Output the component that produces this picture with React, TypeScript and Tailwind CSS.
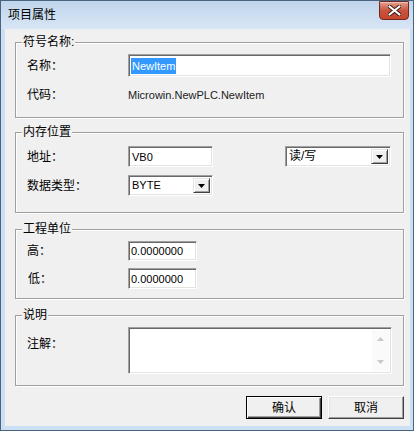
import React from "react";

const font = { fontFamily: '"Liberation Sans", "Noto Sans CJK SC", sans-serif' };

const sunken =
  "bg-white border border-t-[#a0a0a0] border-l-[#a0a0a0] border-b-white border-r-white shadow-[inset_1px_1px_0_#696969,inset_-1px_-1px_0_#e3e3e3]";

function Group({
  title,
  className,
  children,
}: {
  title: string;
  className: string;
  children: React.ReactNode;
}) {
  return (
    <div
      className={`relative ml-[10px] w-[389px] border border-[#a0a0a0] shadow-[inset_1px_1px_0_#fff,1px_1px_0_#fff] ${className}`}
    >
      <span className="absolute left-[6px] -top-[9px] bg-[#f0f0f0] px-[1px] text-[12px] leading-[16px] text-black">
        {title}
      </span>
      {children}
    </div>
  );
}

function DropButton() {
  return (
    <div className="flex h-full w-[17px] items-center justify-center border border-t-[#e3e3e3] border-l-[#e3e3e3] border-b-[#404040] border-r-[#404040] bg-[#f0f0f0] shadow-[inset_1px_1px_0_#fff,inset_-1px_-1px_0_#a0a0a0]">
      <svg width="7" height="4" viewBox="0 0 7 4">
        <path d="M0 0h7L3.5 4z" fill="#000" />
      </svg>
    </div>
  );
}

function Combo({ value, width, size }: { value: string; width: string; size: string }) {
  return (
    <div className={`flex h-[21px] items-stretch ${width} ${sunken} p-[2px]`}>
      <span className={`flex-1 pl-[1px] leading-[15px] ${size}`}>{value}</span>
      <DropButton />
    </div>
  );
}

function Label({ children }: { children: React.ReactNode }) {
  return (
    <span className="block w-[101px] shrink-0 text-[12px] leading-[16px]">{children}</span>
  );
}

function Button({ children, def }: { children: React.ReactNode; def?: boolean }) {
  return (
    <button
      className={`flex h-[23px] w-[76px] items-center justify-center bg-[#f0f0f0] text-[12px] ${
        def
          ? "border border-black shadow-[inset_1px_1px_0_#fff,inset_-1px_-1px_0_#404040,inset_-2px_-2px_0_#a0a0a0]"
          : "border border-t-white border-l-white border-b-[#404040] border-r-[#404040] shadow-[inset_-1px_-1px_0_#a0a0a0,inset_1px_1px_0_#e3e3e3]"
      }`}
    >
      {children}
    </button>
  );
}

export default function App() {
  return (
    <div
      style={font}
      className="flex h-[431px] w-[414px] flex-col border border-[#4a6480] bg-[#cddff2] text-black"
    >
      {/* title bar */}
      <div className="flex h-[28px] shrink-0 justify-between bg-gradient-to-b from-[#c0d5ec] to-[#d8e6f5]">
        <span className="pl-[7px] pt-[6px] text-[12px] leading-[16px]">项目属性</span>
        <div className="mr-[4px] flex h-[19px] w-[30px] items-center justify-center rounded-b-[4px] border border-[#6e2a20] bg-gradient-to-b from-[#e3a08f] via-[#c8533c] to-[#c8452c] shadow-[inset_0_1px_0_#f2c0b2]">
          <svg width="13" height="11" viewBox="0 0 13 11">
            <path
              d="M1.5 1.5l10 8M11.5 1.5l-10 8"
              stroke="#3b1a14"
              strokeWidth="4"
              strokeLinecap="round"
            />
            <path
              d="M1.5 1.5l10 8M11.5 1.5l-10 8"
              stroke="#fff"
              strokeWidth="2.2"
              strokeLinecap="round"
            />
          </svg>
        </div>
      </div>

      {/* client area */}
      <div className="ml-[4px] mr-[3px] mb-[4px] flex flex-1 flex-col bg-[#f0f0f0]">
        <Group title="符号名称:" className="mt-[13px] h-[76px]">
          <div className="flex flex-col pl-[11px] pt-[11px]">
            <div className="flex h-[23px] items-center">
              <Label>名称：</Label>
              <div className={`flex h-[23px] w-[263px] items-center ${sunken} pl-[2px]`}>
                <span className="bg-[#3399ff] px-[1px] text-[11px] leading-[16px] text-white">
                  NewItem
                </span>
              </div>
            </div>
            <div className="mt-[10px] flex items-center">
              <Label>代码：</Label>
              <span className="text-[11px] leading-[16px] text-[#222]">
                Microwin.NewPLC.NewItem
              </span>
            </div>
          </div>
        </Group>

        <Group title="内存位置" className="mt-[14px] h-[81px]">
          <div className="flex flex-col pl-[11px] pt-[13px]">
            <div className="flex h-[21px] items-center">
              <Label>地址：</Label>
              <div className={`flex h-[21px] w-[85px] items-center ${sunken} pl-[3px]`}>
                <span className="text-[11px] leading-[16px]">VB0</span>
              </div>
              <Combo value="读/写" width="ml-[72px] w-[106px]" size="text-[12px]" />
            </div>
            <div className="mt-[8px] flex h-[21px] items-center">
              <Label>数据类型：</Label>
              <Combo value="BYTE" width="w-[85px]" size="text-[11px]" />
            </div>
          </div>
        </Group>

        <Group title="工程单位" className="mt-[16px] h-[70px]">
          <div className="flex flex-col pl-[11px] pt-[11px]">
            <div className="flex h-[20px] items-center">
              <Label>高：</Label>
              <div className={`flex h-[20px] w-[69px] items-center ${sunken} pl-[2px]`}>
                <span className="text-[11px] leading-[16px]">0.0000000</span>
              </div>
            </div>
            <div className="mt-[7px] flex h-[21px] items-center">
              <Label>
                <span className="pl-[1px]">低：</span>
              </Label>
              <div className={`flex h-[21px] w-[69px] items-center ${sunken} pl-[2px]`}>
                <span className="text-[11px] leading-[16px]">0.0000000</span>
              </div>
            </div>
          </div>
        </Group>

        <Group title="说明" className="mt-[16px] h-[71px]">
          <div className="flex pl-[11px] pt-[11px]">
            <div className="pt-[9px]">
              <Label>注解：</Label>
            </div>
            <div className={`flex h-[47px] w-[264px] justify-end ${sunken} p-[2px]`}>
              <div className="flex w-[17px] flex-col items-center justify-between bg-[#fafafa] py-[7px]">
                <svg width="7" height="4" viewBox="0 0 7 4">
                  <path d="M3.5 0L7 4H0z" fill="#c8c8c8" />
                </svg>
                <svg width="7" height="4" viewBox="0 0 7 4">
                  <path d="M0 0h7L3.5 4z" fill="#c8c8c8" />
                </svg>
              </div>
            </div>
          </div>
        </Group>

        <div className="mr-[6px] mt-[10px] flex justify-end gap-[6px]">
          <Button def>确认</Button>
          <Button>取消</Button>
        </div>
      </div>
    </div>
  );
}
